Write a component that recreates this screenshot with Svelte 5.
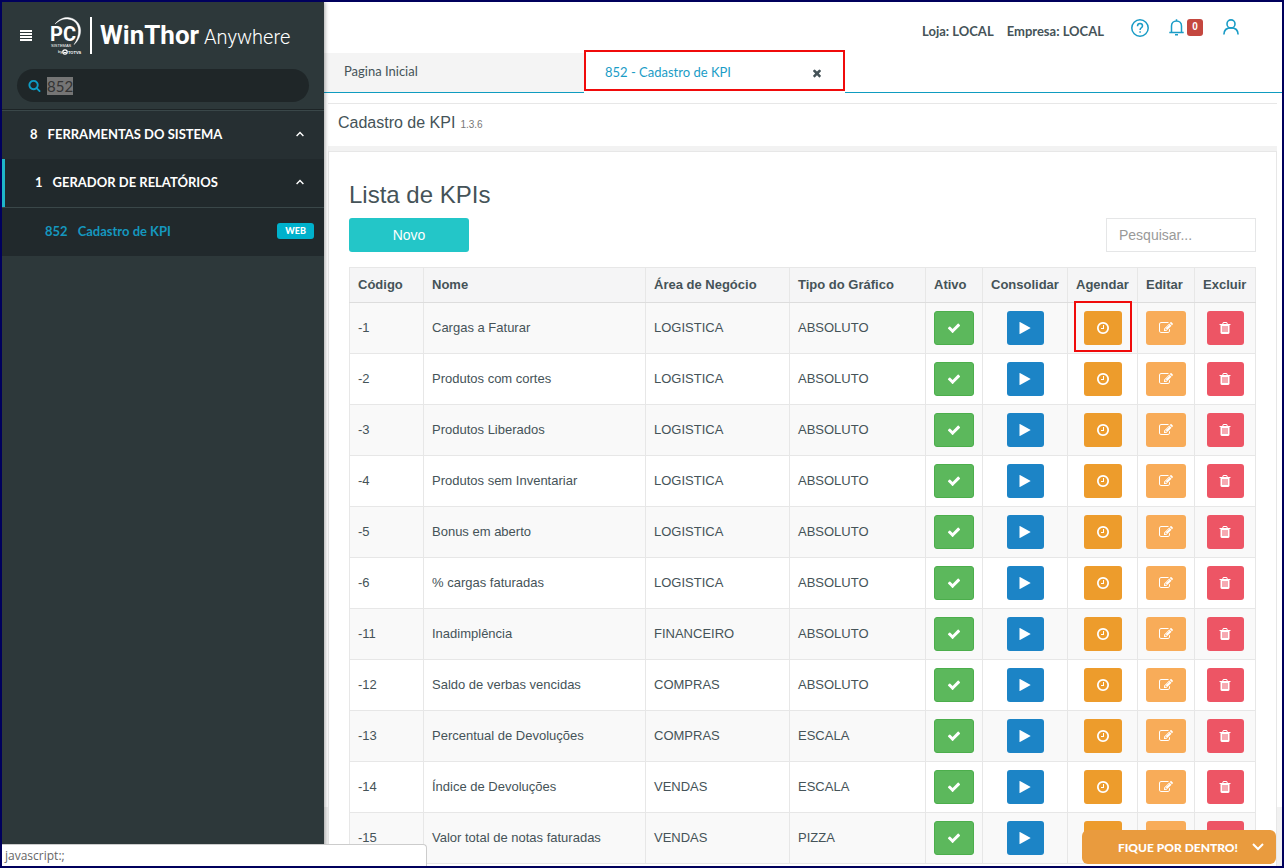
<script>
  import { onMount } from 'svelte';

  const rows = [
    ['-1', 'Cargas a Faturar', 'LOGISTICA', 'ABSOLUTO'],
    ['-2', 'Produtos com cortes', 'LOGISTICA', 'ABSOLUTO'],
    ['-3', 'Produtos Liberados', 'LOGISTICA', 'ABSOLUTO'],
    ['-4', 'Produtos sem Inventariar', 'LOGISTICA', 'ABSOLUTO'],
    ['-5', 'Bonus em aberto', 'LOGISTICA', 'ABSOLUTO'],
    ['-6', '% cargas faturadas', 'LOGISTICA', 'ABSOLUTO'],
    ['-11', 'Inadimplência', 'FINANCEIRO', 'ABSOLUTO'],
    ['-12', 'Saldo de verbas vencidas', 'COMPRAS', 'ABSOLUTO'],
    ['-13', 'Percentual de Devoluções', 'COMPRAS', 'ESCALA'],
    ['-14', 'Índice de Devoluções', 'VENDAS', 'ESCALA'],
    ['-15', 'Valor total de notas faturadas', 'VENDAS', 'PIZZA']
  ];

  const icons = {
    check: 'M1671 566q0 40-28 68l-724 724-136 136q-28 28-68 28t-68-28l-136-136-362-362q-28-28-28-68t28-68l136-136q28-28 68-28t68 28l294 295 656-657q28-28 68-28t68 28l136 136q28 28 28 68z',
    play: 'M1576 927l-1328 738q-23 13-39.5 3t-16.5-36v-1472q0-26 16.5-36t39.5 3l1328 738q23 13 23 31t-23 31z',
    clock: 'M1024 544v448q0 14-9 23t-23 9h-320q-14 0-23-9t-9-23v-64q0-14 9-23t23-9h224v-352q0-14 9-23t23-9h64q14 0 23 9t9 23zm416 352q0-148-73-273t-198-198-273-73-273 73-198 198-73 273 73 273 198 198 273 73 273-73 198-198 73-273zm224 0q0 209-103 385.5t-279.5 279.5-385.5 103-385.5-103-279.5-279.5-103-385.5 103-385.5 279.5-279.5 385.5-103 385.5 103 279.5 279.5 103 385.5z',
    edit: 'M888 1184l116-116-152-152-116 116v56h96v96h56zm440-720q-16-16-33 1l-350 350q-17 17-1 33t33-1l350-350q17-17 1-33zm80 594v190q0 119-84.5 203.5t-203.5 84.5h-832q-119 0-203.5-84.5t-84.5-203.5v-832q0-119 84.5-203.5t203.5-84.5h832q63 0 117 25 15 7 18 23 3 17-9 29l-49 49q-14 14-32 8-23-6-45-6h-832q-66 0-113 47t-47 113v832q0 66 47 113t113 47h832q66 0 113-47t47-113v-126q0-13 9-22l64-64q15-15 35-7t20 29zm-96-738l288 288-672 672h-288v-288zm444 132l-92 92-288-288 92-92q28-28 68-28t68 28l152 152q28 28 28 68t-28 68z',
    trash: 'M704 1376v-704q0-14-9-23t-23-9h-64q-14 0-23 9t-9 23v704q0 14 9 23t23 9h64q14 0 23-9t9-23zm256 0v-704q0-14-9-23t-23-9h-64q-14 0-23 9t-9 23v704q0 14 9 23t23 9h64q14 0 23-9t9-23zm256 0v-704q0-14-9-23t-23-9h-64q-14 0-23 9t-9 23v704q0 14 9 23t23 9h64q14 0 23-9t9-23zm-544-992h448l-48-117q-7-9-17-11h-317q-10 2-17 11zm928 32v64q0 14-9 23t-23 9h-96v948q0 83-47 143.5t-113 60.5h-832q-66 0-113-58.5t-47-141.5v-952h-96q-14 0-23-9t-9-23v-64q0-14 9-23t23-9h309l70-167q15-37 54-63t79-26h320q40 0 79 26t54 63l70 167h309q14 0 23 9t9 23z',
    search: 'M1216 832q0-185-131.5-316.5t-316.5-131.5-316.5 131.5-131.5 316.5 131.5 316.5 316.5 131.5 316.5-131.5 131.5-316.5zm512 832q0 52-38 90t-90 38q-54 0-90-38l-343-342q-179 124-399 124-143 0-273.5-55.5t-225-150-150-225-55.5-273.5 55.5-273.5 150-225 225-150 273.5-55.5 273.5 55.5 225 150 150 225 55.5 273.5q0 220-124 399l343 343q37 37 37 90z',
    times: 'M1490 1322q0 40-28 68l-136 136q-28 28-68 28t-68-28l-294-294-294 294q-28 28-68 28t-68-28l-136-136q-28-28-28-68t28-68l294-294-294-294q-28-28-28-68t28-68l136-136q28-28 68-28t68 28l294 294 294-294q28-28 68-28t68 28l136 136q28 28 28 68t-28 68l-294 294 294 294q28 28 28 68z'
  };

  const actions = [
    { kind: 'active', icon: 'check', label: 'Ativo' },
    { kind: 'run', icon: 'play', label: 'Consolidar' },
    { kind: 'schedule', icon: 'clock', label: 'Agendar' },
    { kind: 'edit', icon: 'edit', label: 'Editar' },
    { kind: 'delete', icon: 'trash', label: 'Excluir' }
  ];

  let menuQuery = $state('852');
  let filter = $state('');
  let menuInput;

  onMount(() => {
    menuInput.focus();
    menuInput.select();
  });
</script>

{#snippet glyph(name, size)}
  <svg width={size} height={size} viewBox="0 0 1792 1792" fill="currentColor" aria-hidden="true"><path d={icons[name]} /></svg>
{/snippet}

{#snippet chevron()}
  <svg width="8" height="6" viewBox="0 0 8 6" fill="none" stroke="currentColor" stroke-width="1.4" aria-hidden="true"><path d="M.6 5 4 1.6 7.4 5" /></svg>
{/snippet}

<div class="frame">
  <aside>
    <div class="brand">
      <button class="burger" aria-label="Menu">
        <svg width="12" height="12" viewBox="0 0 12 12" fill="#fff"><path d="M0 0h12v2H0zM0 3h12v2H0zM0 6h12v2H0zM0 9h12v2H0z" /></svg>
      </button>
      <svg class="mark" width="32" height="38" viewBox="0 0 32 38" aria-hidden="true">
        <path d="M5 7C9 2 14 .3 18 .5c7 .4 12.300 6 12.600 12.500.2 6-2.600 11-6.600 14.600 2.800-4 4.800-9 4.500-14.500C28 6.500 24 2.600 17.500 2 13 1.600 9 3.500 5 7z" fill="#fff" stroke="#fff" stroke-width=".4" />
        <text x="0" y="24" class="pc">PC</text>
        <text x="1" y="30" class="tiny">SISTEMAS</text>
        <text x="8" y="36" class="tiny">by</text>
        <circle cx="15" cy="35" r="2.200" fill="none" stroke="#fff" stroke-width="1.200" />
        <path d="M13.500 35.500h3" stroke="#fff" stroke-width="1" />
        <text x="18" y="37" class="tiny bold">TOTVS</text>
      </svg>
      <span class="rule"></span>
      <span class="name"><b>WinThor</b> Anywhere</span>
    </div>
    <label class="search">
      {@render glyph('search', 13)}
      <input bind:this={menuInput} bind:value={menuQuery} aria-label="Pesquisar no menu" />
    </label>
    <nav>
      <a class="group" href="#ferramentas"><span>8</span><span class="title">FERRAMENTAS DO SISTEMA</span>{@render chevron()}</a>
      <a class="group sub" href="#relatorios"><span>1</span><span class="title">GERADOR DE RELATÓRIOS</span>{@render chevron()}</a>
      <a class="leaf" href="#kpi"><span>852</span><span class="title">Cadastro de KPI</span><span class="web">WEB</span></a>
    </nav>
  </aside>

  <main>
    <header>
      <span class="env">Loja: LOCAL</span>
      <span class="env">Empresa: LOCAL</span>
      <div class="tools">
        <button aria-label="Ajuda">
          <svg width="18" height="18" viewBox="0 0 18 18" fill="none" stroke="currentColor" stroke-width="1.500"><circle cx="9" cy="9" r="8.200" /><path d="M6.500 7.200C6.500 5.500 7.600 4.600 9 4.600s2.500.9 2.500 2.300c0 1.800-2.400 2-2.400 4" /><path d="M9.100 12.200v1.500" /></svg>
        </button>
        <button class="bell" aria-label="Notificações">
          <svg width="15" height="17" viewBox="0 0 15 17" fill="none" stroke="currentColor" stroke-width="1.500"><path d="M.3 13.400h14.400M2.500 13V7c0-3 2.200-5 5-5s5 2 5 5v6M7.500 2V.3M6 15.700h3" /></svg>
          <span class="count">0</span>
        </button>
        <button aria-label="Usuário">
          <svg width="16" height="16" viewBox="0 0 16 16" fill="none" stroke="currentColor" stroke-width="1.600"><circle cx="8" cy="4.900" r="4" /><path d="M.9 15.500C1 11 4 8.900 8 8.900s7 2.100 7.100 6.600" /></svg>
        </button>
      </div>
    </header>

    <div class="tabs">
      <a class="tab" href="#inicio">Pagina Inicial</a>
      <div class="tab current">
        <a href="#kpi">852 - Cadastro de KPI</a>
        <button aria-label="Fechar">{@render glyph('times', 12)}</button>
      </div>
      <div class="rest"></div>
    </div>

    <div class="content">
      <div class="heading"><h1>Cadastro de KPI <small>1.3.6</small></h1></div>
      <section>
        <h2>Lista de KPIs</h2>
        <div class="bar">
          <button class="new">Novo</button>
          <input bind:value={filter} placeholder="Pesquisar..." aria-label="Pesquisar" />
        </div>
        <table>
          <colgroup>
            <col class="c-code" /><col /><col class="c-area" /><col class="c-type" /><col class="c-narrow" /><col class="c-run" /><col class="c-sched" /><col class="c-narrow" /><col class="c-del" />
          </colgroup>
          <thead>
            <tr>
              <th>Código</th><th>Nome</th><th>Área de Negócio</th><th>Tipo do Gráfico</th>
              {#each actions as a}<th>{a.label}</th>{/each}
            </tr>
          </thead>
          <tbody>
            {#each rows as row, i}
              <tr>
                {#each row as cell}<td>{cell}</td>{/each}
                {#each actions as a}
                  <td class="act">
                    <button class={a.kind} class:marked={i === 0 && a.kind === 'schedule'} aria-label={`${a.label} ${row[1]}`}>{@render glyph(a.icon, 14)}</button>
                  </td>
                {/each}
              </tr>
            {/each}
          </tbody>
        </table>
      </section>
    </div>
  </main>

  <div class="status">javascript:;</div>
  <button class="news">
    FIQUE POR DENTRO!
    <svg width="12" height="8" viewBox="0 0 12 8" fill="none" stroke="currentColor" stroke-width="2" aria-hidden="true"><path d="M1 1l5 5 5-5" /></svg>
  </button>
</div>

<style>
  :global(body) { margin: 0; }
  * { box-sizing: border-box; }
  button { border: 0; padding: 0; background: none; color: inherit; font: inherit; cursor: pointer; }
  a { color: inherit; text-decoration: none; }
  svg { display: block; flex: none; }

  .frame {
    position: relative;
    display: flex;
    height: 100vh;
    overflow: hidden;
    border: 2px solid #00005c;
    background: #fff;
    color: #455358;
    font-family: "Liberation Sans", Arial, sans-serif;
    font-size: 13px;
  }

  aside {
    flex: none;
    width: 322px;
    z-index: 1;
    background: #2d383a;
    color: #fff;
    font-family: Lato, sans-serif;
    box-shadow: 1px 0 4px rgba(0, 0, 0, .35);
  }
  .brand { display: flex; align-items: center; height: 67px; padding-left: 18px; }
  .burger { margin-right: 18px; }
  .mark { margin-right: 8px; }
  .mark text { fill: #fff; font-family: "Liberation Sans", Arial, sans-serif; }
  .mark .pc { font-size: 20px; font-weight: 700; font-family: Roboto, sans-serif; }
  .mark .tiny { font-size: 4px; }
  .mark .bold { font-weight: 700; }
  .rule { flex: none; width: 2px; height: 37px; margin-right: 8px; background: #fff; }
  .name { font-family: Roboto, sans-serif; font-size: 20px; font-weight: 300; line-height: 36px; white-space: nowrap; }
  .name b { font-size: 26px; font-weight: 700; }

  .search {
    display: flex;
    align-items: center;
    gap: 6px;
    height: 33px;
    margin: 0 15px 7px;
    padding: 0 11px;
    border-radius: 17px;
    background: #1f2628;
    color: #0e9cc4;
  }
  .search input {
    flex: 1;
    min-width: 0;
    padding: 0;
    border: 0;
    outline: 0;
    background: none;
    color: #777;
    font-family: Lato, sans-serif;
    font-size: 15px;
  }
  .search input::selection { background: #757575; color: #333; }

  nav { border-top: 1px solid #1d2426; font-weight: 700; }
  nav a { display: flex; align-items: center; gap: 10px; height: 49px; padding: 0 20px 2px 28px; background: #262f32; border-top: 1px solid #3a4749; }
  nav .title { flex: 1; }
  nav .sub { height: 48px; padding-left: 30px; border-left: 3px solid #1fb5c9; border-top: 0; background: #21292c; }
  nav .leaf { padding-right: 10px; padding-left: 43px; background: #21292c; color: #1597bf; }
  .web { padding: 0 8px; border-radius: 3px; background: #00b1cc; color: #fff; font-size: 9px; font-weight: 900; line-height: 16px; }

  main { flex: 1; min-width: 0; display: flex; flex-direction: column; }
  header {
    display: flex;
    justify-content: flex-end;
    flex: none;
    gap: 13px;
    height: 51px;
    padding: 17px 43px 0 0;
    font-family: Lato, sans-serif;
    font-weight: 700;
  }
  .env { padding-top: 4px; }
  .tools { display: flex; align-items: flex-start; gap: 20px; margin-left: 14px; color: #1a9cc6; }
  .bell { display: flex; gap: 3px; }
  .count { width: 16px; border-radius: 3px; background: #c4473f; color: #fff; font-size: 10px; line-height: 16px; text-align: center; font-family: "Liberation Sans", Arial, sans-serif; }

  .tabs { display: flex; flex: none; height: 40px; font-family: Lato, sans-serif; }
  .tab { width: 260px; padding: 0 20px; background: #f4f4f4; border-bottom: 1px solid #0f9cc0; line-height: 37px; }
  .current {
    display: flex;
    align-items: center;
    justify-content: space-between;
    width: 261px;
    height: 41px;
    margin-top: -3px;
    background: #fff;
    border: 2px solid #f00b0b;
    color: #1a9cc6;
    padding: 4px 20px 0 19px;
  }
  .current button { color: #455358; }
  .rest { flex: 1; border-bottom: 1px solid #0f9cc0; }

  .content { flex: 1; padding: 10px 5px 0 4px; background: linear-gradient(#fff 0 714px, #f1f1f1 714px); }
  .heading { padding: 0 10px; border-top: 1px solid #e7e7e7; border-bottom: 5px solid #f2f2f2; background: #fff; }
  h1 { display: flex; align-items: baseline; gap: 5px; height: 42px; margin: 0; font-size: 16px; font-weight: 400; line-height: 38px; }
  h1 small { font-size: 10px; color: #777; }
  section { min-height: 100%; padding: 28px 20px 2px; border: 1px solid #e7e7e7; background: #fff; }
  h2 { margin: 0 0 8px; font-size: 24px; font-weight: 400; line-height: 30px; }
  .bar { display: flex; justify-content: space-between; margin-bottom: 15px; }
  .new { width: 120px; height: 34px; border-radius: 3px; background: #23c6c8; color: #fff; font-size: 14px; }
  .bar input { width: 150px; height: 34px; padding: 0 12px; border: 1px solid #e5e6e7; font: 14px "Liberation Sans", Arial, sans-serif; }
  .bar input::placeholder { color: #999; }

  table { width: 100%; table-layout: fixed; border-collapse: collapse; }
  .c-code { width: 74px; }
  .c-area { width: 144px; }
  .c-type { width: 136px; }
  .c-narrow { width: 57px; }
  .c-run { width: 85px; }
  .c-sched { width: 70px; }
  .c-del { width: 61px; }
  th, td { padding: 0 8px 2px; border: 1px solid #e7e7e7; text-align: left; white-space: nowrap; }
  th { height: 35px; background: #f5f5f6; border-bottom-color: #ddd; }
  td { height: 51px; }
  tbody tr:nth-child(odd) { background: #f9f9f9; }
  td.act { padding: 0; }
  td button { position: relative; display: flex; align-items: center; justify-content: center; width: 37px; height: 34px; margin: 0 auto; border-radius: 3px; color: #fff; }
  .active { width: 40px; background: #5cb85c; border: 1px solid #4cae4c; }
  .run { background: #1c84c6; }
  .schedule { width: 38px; background: #ed9c2c; }
  .edit { width: 40px; background: #f8ac59; }
  .delete { background: #ed5565; }
  .marked::after { content: ""; position: absolute; inset: -10px -10px -7px; border: 2px solid #f00b0b; }

  .status {
    position: absolute;
    z-index: 2;
    left: 0;
    bottom: 0;
    width: 425px;
    height: 22px;
    padding-left: 3px;
    border-top: 1px solid #ccc;
    border-right: 1px solid #ccc;
    border-top-right-radius: 4px;
    background: #fff;
    color: #666;
    font-family: "Open Sans", sans-serif;
    font-size: 12px;
    line-height: 21px;
  }
  .news {
    position: absolute;
    right: 6px;
    bottom: 2px;
    display: flex;
    align-items: center;
    justify-content: flex-end;
    gap: 14px;
    width: 194px;
    height: 34px;
    padding-right: 12px;
    border-radius: 6px;
    background: #e99b3e;
    color: #fff;
    font-family: Lato, sans-serif;
    font-size: 12px;
    font-weight: 900;
  }
</style>
